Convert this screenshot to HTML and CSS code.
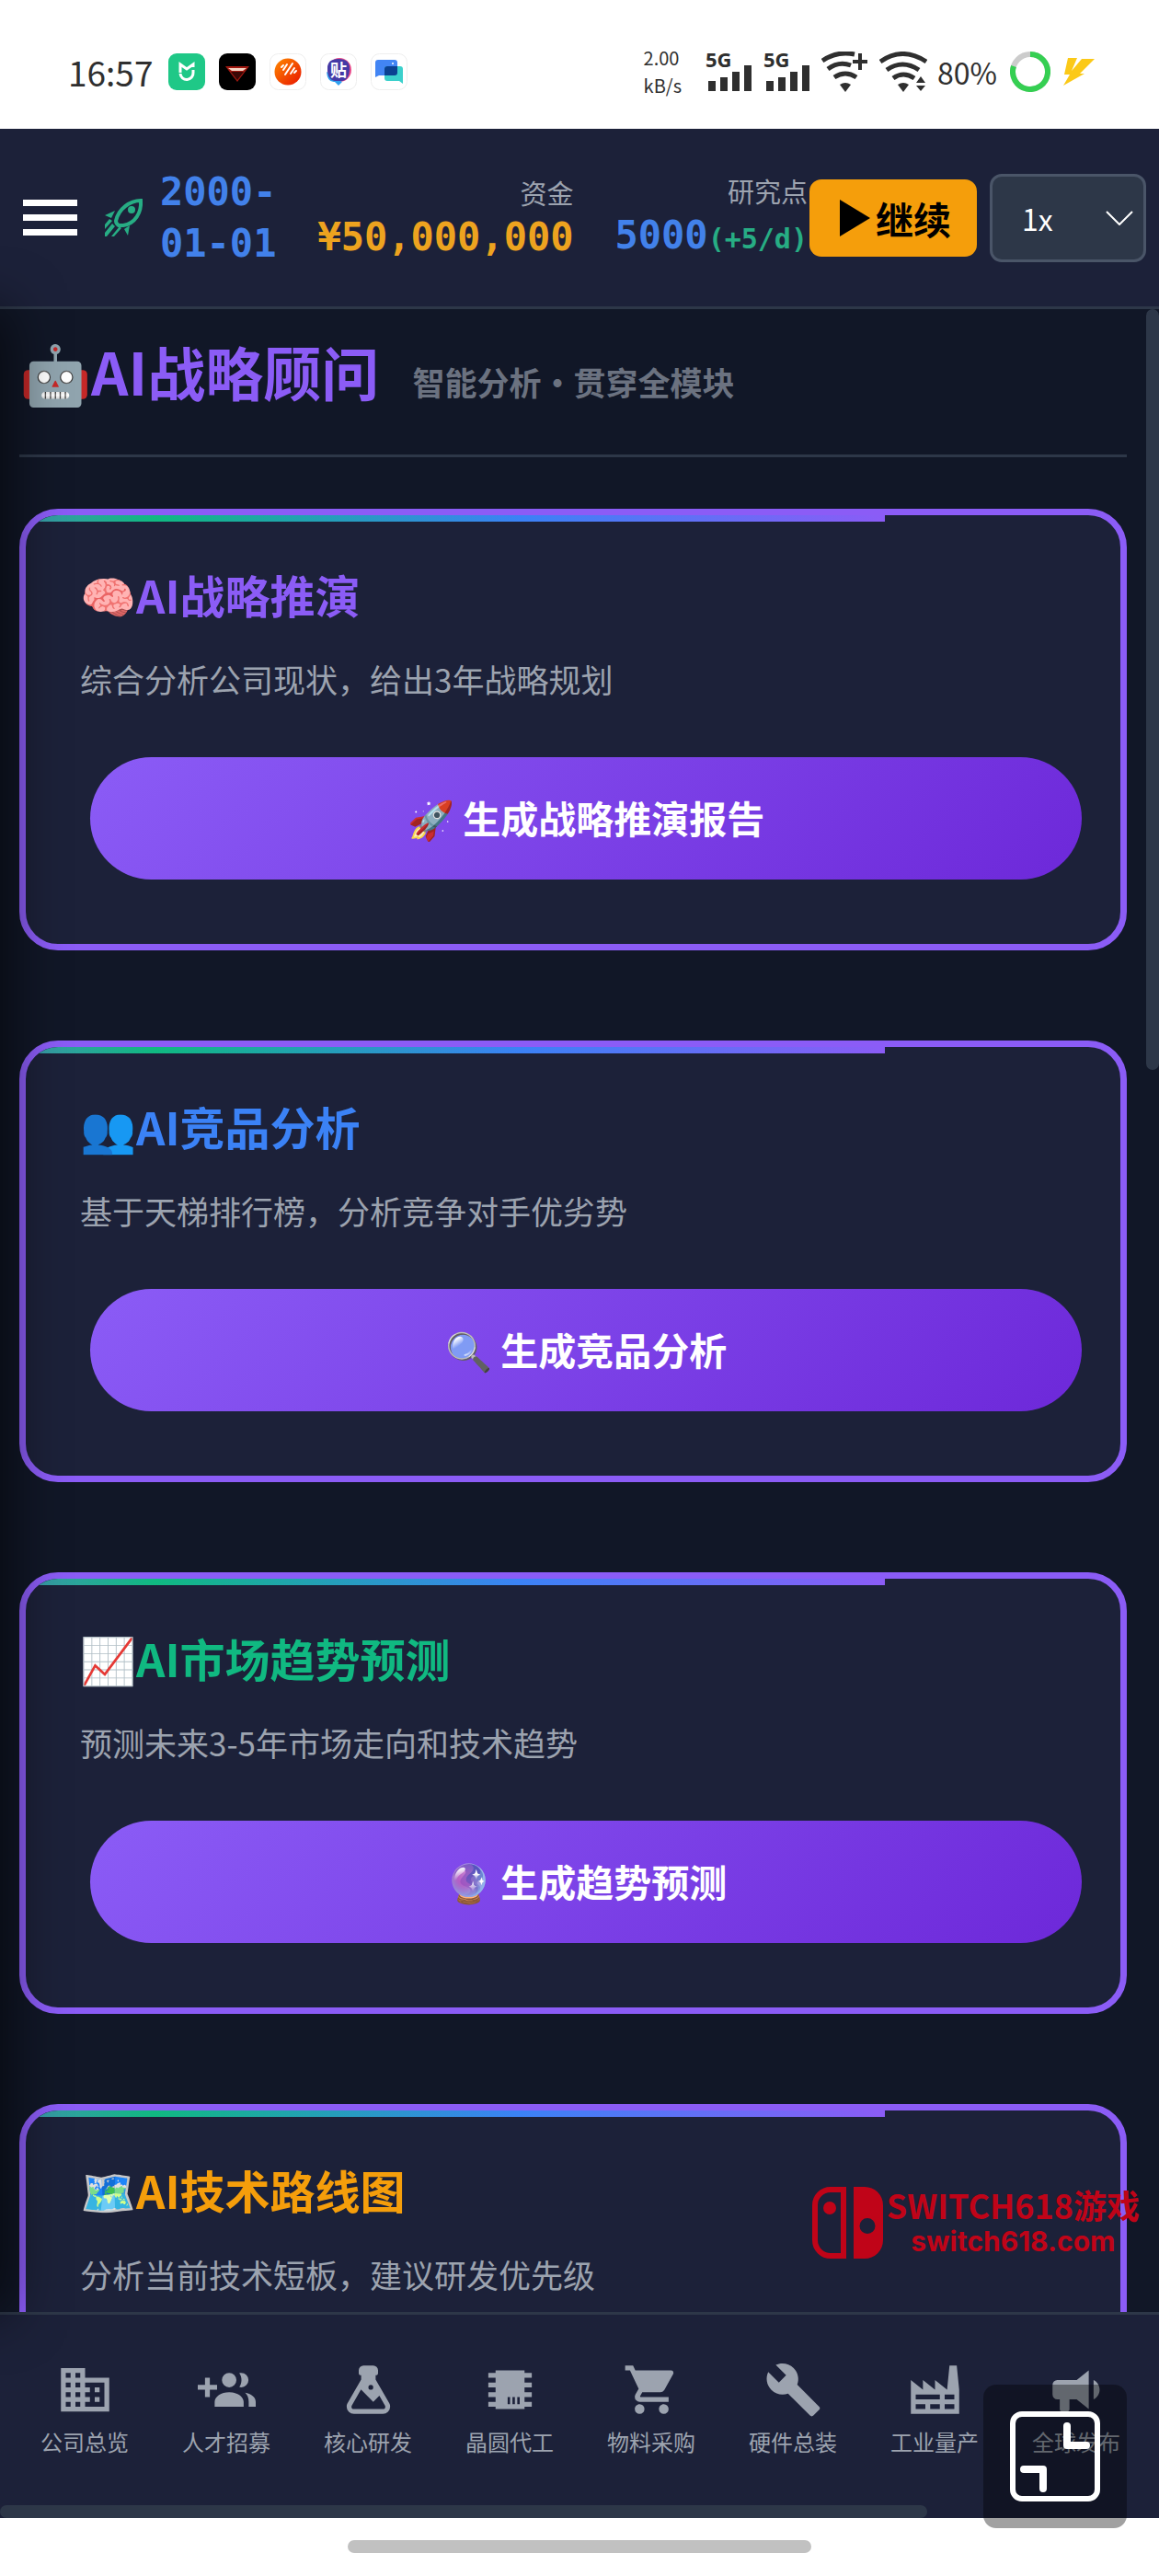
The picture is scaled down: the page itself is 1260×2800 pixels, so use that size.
FILE: index.html
```html
<!DOCTYPE html>
<html lang="zh-CN">
<head>
    <meta charset="UTF-8">
    <title>AI战略顾问</title>
    <link rel="stylesheet" href="styles.css">
</head>
<body>
    <div class="sys-bar">
        <span class="clock">16:57</span>
        <svg class="app" viewBox="0 0 40 40"><rect width="40" height="40" rx="9" fill="#1fc887"/><path d="M13 21V12l7 5 7-5v3" fill="none" stroke="#fff" stroke-width="3"/><path d="M13 22a7 7 0 0 0 14-1v-3" fill="none" stroke="#fff" stroke-width="3"/></svg>
        <svg class="app" viewBox="0 0 40 40"><rect width="40" height="40" rx="9" fill="#000"/><path d="M7 14h26L20 31z" fill="#a01810"/><path d="M10 16h20l-4 3H14z" fill="#f5d5c5"/><path d="M13 20h14l-7 9z" fill="#3a0705"/></svg>
        <svg class="app" viewBox="0 0 40 40"><defs><linearGradient id="sun" x1="0" y1="0" x2="1" y2="1"><stop offset="0" stop-color="#ff8a00"/><stop offset="1" stop-color="#e81400"/></linearGradient></defs><rect x=".5" y=".5" width="39" height="39" rx="9" fill="#fff" stroke="#eee"/><circle cx="20" cy="20" r="14.500" fill="url(#sun)"/><path d="M13 15l2-2M15 18l4-6M17 23l8-12M23 22l4-6M27 21l2-2" stroke="#fff" stroke-width="2" stroke-linecap="round"/></svg>
        <svg class="app" viewBox="0 0 40 40"><rect x=".5" y=".5" width="39" height="39" rx="9" fill="#fff" stroke="#eee"/><circle cx="21" cy="18" r="13" fill="#e84a8a"/><path d="M7 20q1 12 9 11l4 4 4-4z" fill="#2fa0f0"/><path d="M8 16q0-10 12-10t12 10q0 13-8 14h-8Q8 29 8 16z" fill="#453aa6"/><text x="20" y="25" text-anchor="middle" class="app-char">贴</text></svg>
        <svg class="app" viewBox="0 0 40 40"><rect x=".5" y=".5" width="39" height="39" rx="9" fill="#fff" stroke="#eee"/><path d="M5 26V10q0-3 3-3h18q3 0 3 3v11q0 3-3 3H9z" fill="#4285f4"/><path d="M35 33V17q0-3-3-3H18q-3 0-3 3v10q0 3 3 3h13z" fill="#3cd0cc"/><path d="M15 24v-7q0-3 3-3h11v7q0 3-3 3z" fill="#0b4191"/><circle cx="24" cy="11" r="1" fill="#fff"/></svg>
        <span class="speed">2.00<br>kB/s</span>
        <svg class="signal" viewBox="0 0 52 44"><text x="0" y="17">5G</text><path d="M3 32h8v11H3zM16 28h8v15h-8zM29 22h8v21h-8zM42 15h8v28h-8z"/></svg>
        <svg class="signal" viewBox="0 0 52 44"><text x="0" y="17">5G</text><path d="M3 32h8v11H3zM16 28h8v15h-8zM29 22h8v21h-8zM42 15h8v28h-8z"/></svg>
        <svg class="wifi" viewBox="0 0 52 44"><g fill="none" stroke="#2f2f2f" stroke-width="5"><path d="M1 10Q17-1 36 3"/><path d="M7 19q12-9 25-4"/><path d="M14 28q12-8 24 0"/></g><path d="M20 36q6-4 12 0l-6 8z"/><path d="M34 9h6V2h4v7h6v4h-6v7h-4v-7h-6z"/></svg>
        <svg class="wifi" viewBox="0 0 52 44"><g fill="none" stroke="#2f2f2f" stroke-width="5"><path d="M1 11Q25-6 51 11"/><path d="M8 20q17-12 35 0"/><path d="M15 29q11-8 23 0"/></g><path d="M20 36q6-4 12 0l-6 8zM45 27l5 7H40zM45 43l-5-6h10z"/></svg>
        <span class="battery-num">80%</span>
        <svg class="ring" viewBox="0 0 44 44"><circle cx="22" cy="22" r="19" fill="none" stroke="#ccc" stroke-width="6"/><path d="M22 3a19 19 0 1 1-18 13" fill="none" stroke="#35cf52" stroke-width="6"/></svg>
        <svg class="bolt" viewBox="0 0 34 30"><path d="M5 0h10L9 14 20 1h14L18 17h5L0 30l7-12H1z" fill="#fbc918"/></svg>
    </div>

    <header class="top-bar">
        <button class="menu-btn" aria-label="菜单"><span></span><span></span><span></span></button>
        <svg class="logo" viewBox="0 0 42 42"><path d="M39 2C27 2 15 11 12 24q0 3 3 5h5C33 27 40 15 39 2z" fill="none" stroke="#27ad84" stroke-width="4"/><circle cx="29" cy="12" r="4"/><path d="M0 18l11-5-4 8zM21 33l6-4-2 11zM0 37l8-10 3 3-9 11H0zM7 41l9-11 2 2-8 9zM5 22l3 2-8 9v-5z"/></svg>
        <div class="date">2000-<br>01-01</div>
        <div class="stat">
            <span class="stat-label">资金</span>
            <span class="stat-value money">¥50,000,000</span>
        </div>
        <div class="stat">
            <span class="stat-label">研究点</span>
            <span class="stat-value points">5000<small>(+5/d)</small></span>
        </div>
        <button class="play-btn"><svg viewBox="0 0 33 40"><path d="M0 0l33 20L0 40z"/></svg>继续</button>
        <div class="speed-box">
            <select class="speed-select" aria-label="速度"><option>1x</option></select>
            <svg viewBox="0 0 30 16"><path d="M1 1l14 14L29 1" fill="none" stroke="#fff" stroke-width="2"/></svg>
        </div>
    </header>

    <main class="content">
        <h1 class="page-title">🤖AI战略顾问 <small>智能分析·贯穿全模块</small></h1>

        <section class="ai-card">
            <h3 class="purple">🧠AI战略推演</h3>
            <p>综合分析公司现状，给出3年战略规划</p>
            <button class="ai-btn">🚀 生成战略推演报告</button>
        </section>

        <section class="ai-card">
            <h3 class="blue">👥AI竞品分析</h3>
            <p>基于天梯排行榜，分析竞争对手优劣势</p>
            <button class="ai-btn">🔍 生成竞品分析</button>
        </section>

        <section class="ai-card">
            <h3 class="green">📈AI市场趋势预测</h3>
            <p>预测未来3-5年市场走向和技术趋势</p>
            <button class="ai-btn">🔮 生成趋势预测</button>
        </section>

        <section class="ai-card">
            <h3 class="orange">🗺️AI技术路线图</h3>
            <p>分析当前技术短板，建议研发优先级</p>
        </section>

        <div class="scroll-thumb"></div>

        <div class="watermark">
            <svg viewBox="0 0 77 78"><path d="M34 3H20A17 17 0 0 0 3 20v38a17 17 0 0 0 17 17h14z" fill="none" stroke="#c00418" stroke-width="6"/><circle cx="19" cy="23" r="7"/><path fill-rule="evenodd" d="M45 0h12a20 20 0 0 1 20 20v38a20 20 0 0 1-20 20H45zM60 34a8 8 0 1 0 0 17 8 8 0 0 0 0-17z"/></svg>
            <div><span>SWITCH618游戏</span><span class="url">switch618.com</span></div>
        </div>
    </main>

    <nav class="bottom-nav">
        <div class="nav-items">
            <a href="#company"><svg viewBox="0 0 24 24"><path d="M12 7V3H2v18h20V7H12zM6 19H4v-2h2v2zm0-4H4v-2h2v2zm0-4H4V9h2v2zm0-4H4V5h2v2zm4 12H8v-2h2v2zm0-4H8v-2h2v2zm0-4H8V9h2v2zm0-4H8V5h2v2zm10 12h-8v-2h2v-2h-2v-2h2v-2h-2V9h8v10zm-2-8h-2v2h2v-2zm0 4h-2v2h2v-2z"/></svg>公司总览</a>
            <a href="#hire"><svg viewBox="0 0 24 24"><path d="M8 10H5V7H3v3H0v2h3v3h2v-3h3zM13 11a3 3 0 1 0 0-6 3 3 0 0 0 0 6zM13 13c-3.300 0-6 1.800-6 4v2h12v-2c0-2.200-2.700-4-6-4zM17.200 5.100c.6.800.9 1.800.9 2.900s-.3 2.100-.9 2.900c.2.100.5.100.8.100a3 3 0 0 0 0-6c-.3 0-.6 0-.8.100zM19.600 13.200c1 .9 1.500 2.200 1.500 3.800v2H24v-2c0-2-2-3.400-4.400-3.800z"/></svg>人才招募</a>
            <a href="#research"><svg viewBox="0 0 24 24"><path d="M6 22a3 3 0 0 1-3-3c0-.6.18-1.16.5-1.63L9 7.810V6a1 1 0 0 1-1-1V4a2 2 0 0 1 2-2h4a2 2 0 0 1 2 2v1a1 1 0 0 1-1 1v1.810l5.500 9.560c.32.47.5 1.030.5 1.630a3 3 0 0 1-3 3H6m-1-3a1 1 0 0 0 1 1h12a1 1 0 0 0 1-1c0-.21-.07-.41-.18-.57l-2.290-3.960L14 17l-5.070-5.070-3.750 6.500c-.11.16-.18.36-.18.57m8-9a1 1 0 0 0-1 1 1 1 0 0 0 1 1 1 1 0 0 0 1-1 1 1 0 0 0-1-1z"/></svg>核心研发</a>
            <a href="#wafer"><svg viewBox="0 0 24 24"><path d="M6 4h12v1h3v2h-3v2h3v2h-3v2h3v2h-3v2h3v2h-3v1H6v-1H3v-2h3v-2H3v-2h3v-2H3V9h3V7H3V5h3V4m5 11v3h1v-3h-1m2 0v3h1v-3h-1m2 0v3h1v-3h-1z"/></svg>晶圆代工</a>
            <a href="#purchase"><svg viewBox="0 0 24 24"><path d="M17 18a2 2 0 0 1 2 2 2 2 0 0 1-2 2 2 2 0 0 1-2-2c0-1.110.89-2 2-2M1 2h3.270l.94 2H20a1 1 0 0 1 1 1c0 .17-.05.34-.12.5l-3.580 6.470c-.34.61-1 1.030-1.750 1.030H8.100l-.9 1.630-.03.12a.25.25 0 0 0 .25.25H19v2H7a2 2 0 0 1-2-2c0-.35.09-.68.24-.96l1.360-2.450L3 4H1V2m6 16a2 2 0 0 1 2 2 2 2 0 0 1-2 2 2 2 0 0 1-2-2c0-1.110.89-2 2-2z"/></svg>物料采购</a>
            <a href="#assemble"><svg viewBox="0 0 24 24"><path d="M22.700 19l-9.100-9.100c.9-2.300.4-5-1.500-6.900-2-2-5-2.400-7.400-1.300L9 6 6 9 1.600 4.700C.4 7.100.9 10.100 2.900 12.100c1.900 1.900 4.600 2.400 6.900 1.500l9.100 9.100c.4.4 1 .4 1.400 0l2.300-2.300c.5-.4.5-1.100.1-1.400z"/></svg>硬件总装</a>
            <a href="#factory"><svg viewBox="0 0 24 24"><path d="M4 18v2h4v-2H4m0-4v2h10v-2H4m6 4v2h4v-2h-4m6-4v2h4v-2h-4m0 4v2h4v-2h-4M2 22V8l5 4V8l5 4V8l5 4 1-10h3l1 10v10H2z"/></svg>工业量产</a>
            <a href="#launch"><svg viewBox="0 0 24 24"><path d="M12 8H4a2 2 0 0 0-2 2v4a2 2 0 0 0 2 2h1v4a1 1 0 0 0 1 1h2a1 1 0 0 0 1-1v-4h3l5 4V4l-5 4m9.500 4c0 1.710-.96 3.260-2.500 4V8c1.530.75 2.500 2.300 2.500 4z"/></svg>全球发布</a>
        </div>
        <div class="nav-thumb"></div>
    </nav>

    <footer class="gesture-bar">
        <div class="pill"></div>
        <button class="shrink-btn" aria-label="退出全屏"><svg viewBox="0 0 98 98"><g fill="none" stroke="#fff"><rect x="3" y="3" width="92" height="92" rx="10" stroke-width="6"/><path d="M62 16v21h21M15 63h21v21" stroke-width="8" stroke-linecap="round" stroke-linejoin="round"/></g></svg></button>
    </footer>
</body>
</html>
```
FILE: styles.css
```css
* {
    box-sizing: border-box;
    margin: 0;
    padding: 0;
}
body {
    display: flex;
    flex-direction: column;
    height: 100vh;
    overflow: hidden;
    background: #111727;
    color: #fff;
    font-family: "Noto Sans CJK SC", sans-serif;
}
button, select {
    font-family: inherit;
    border: none;
    cursor: pointer;
}
svg {
    display: block;
    flex-shrink: 0;
}

/* 系统状态栏 */
.sys-bar {
    display: flex;
    align-items: center;
    height: 140px;
    padding: 16px 70px 0 74px;
    background: #fff;
    color: #2f2f2f;
    fill: #2f2f2f;
}
.clock {
    width: 94px;
    font-size: 37px;
}
.app {
    width: 40px;
    height: 40px;
    margin-left: 15px;
}
.app-char {
    font-size: 18px;
    font-weight: bold;
    fill: #fff;
}
.speed {
    margin-left: auto;
    margin-right: 26px;
    font-size: 20px;
    line-height: 30px;
}
.signal {
    width: 52px;
    height: 44px;
    margin-right: 11px;
    overflow: visible;
    font: bold 22px "Noto Sans", sans-serif;
}
.wifi {
    width: 52px;
    height: 44px;
    margin-right: 11px;
}
.battery-num {
    font-size: 32px;
}
.ring {
    width: 44px;
    height: 44px;
    margin: 0 14px;
}
.bolt {
    width: 34px;
    height: 30px;
}

/* 顶部栏 */
.top-bar {
    display: flex;
    align-items: center;
    height: 196px;
    padding: 0 14px 0 25px;
    background: #1c2139;
    border-bottom: 3px solid #2d3748;
}
.menu-btn {
    display: flex;
    flex-direction: column;
    gap: 9px;
    width: 59px;
    background: none;
}
.menu-btn span {
    height: 7px;
    background: #fff;
}
.logo {
    width: 42px;
    height: 42px;
    margin: 0 18px 0 30px;
    fill: #27ad84;
}
.date, .stat-value {
    font-family: "DejaVu Sans Mono", monospace;
    font-size: 42px;
    font-weight: bold;
    line-height: 56px;
    white-space: nowrap;
}
.date {
    color: #4281ea;
}
.stat {
    display: flex;
    flex-direction: column;
    align-items: flex-end;
    margin-left: auto;
}
.stat-label {
    font-size: 29px;
    line-height: 42px;
    color: #9ca3af;
}
.money {
    color: #eda31f;
}
.points {
    color: #4281ea;
}
.points small {
    font-size: 30px;
    color: #27ad84;
}
.play-btn {
    display: flex;
    align-items: center;
    gap: 6px;
    height: 84px;
    margin: 0 14px 0 2px;
    padding: 0 28px 0 33px;
    border-radius: 13px;
    background: #f59e0b;
    color: #000;
    font-size: 41px;
    font-weight: bold;
}
.play-btn svg {
    width: 33px;
    height: 40px;
}
.speed-box {
    position: relative;
}
.speed-box svg {
    position: absolute;
    top: 40px;
    right: 14px;
    width: 30px;
    height: 16px;
    pointer-events: none;
}
.speed-select {
    appearance: none;
    width: 170px;
    height: 96px;
    padding-left: 32px;
    border: 3px solid #4a5568;
    border-radius: 13px;
    background: #2d3748;
    color: #fff;
    font-size: 32px;
}

/* 主内容 */
.content {
    position: relative;
    flex: 1;
    min-height: 0;
    padding: 23px 35px 0 21px;
}
/* 收起的侧边栏投下的阴影 */
.content::before {
    content: "";
    position: absolute;
    z-index: 2;
    top: 0;
    bottom: 0;
    left: -100px;
    width: 100px;
    box-shadow: 10px 0 60px rgba(0, 0, 0, 0.6);
}
.page-title {
    margin-bottom: 56px;
    padding-bottom: 47px;
    border-bottom: 3px solid #2d3748;
    color: #8b5cf6;
    font-size: 63px;
    line-height: 88px;
}
.page-title small {
    margin-left: 22px;
    color: #6b7280;
    font-size: 35px;
    line-height: 35px;
}
.ai-card {
    position: relative;
    margin-bottom: 98px;
    padding: 50px 42px 70px 59px;
    border: 7px solid #8b5cf6;
    border-radius: 42px;
    background: #1c2139;
    overflow: hidden;
}
.ai-card::before {
    content: "";
    position: absolute;
    top: 0;
    left: -256px;
    width: 100%;
    height: 7px;
    background: linear-gradient(90deg, #8b5cf6, #10b981, #3b82f6, #8b5cf6);
}
.ai-card h3 {
    font-size: 49px;
    line-height: 72px;
}
.ai-card p {
    margin-top: 28px;
    color: #9ca3af;
    font-size: 35px;
    line-height: 56px;
}
.purple {
    color: #8b5cf6;
}
.blue {
    color: #3b82f6;
}
.green {
    color: #10b981;
}
.orange {
    color: #f59e0b;
}
.ai-btn {
    display: block;
    width: calc(100% - 11px);
    height: 133px;
    margin: 57px 0 0 11px;
    padding-bottom: 4px;
    border-radius: 67px;
    background: linear-gradient(135deg, #8b5cf6, #6d28d9);
    color: #fff;
    font-size: 41px;
    font-weight: bold;
}
.scroll-thumb {
    position: absolute;
    top: 0;
    right: 0;
    width: 14px;
    height: 38%;
    border-radius: 7px;
    background: #2d3748;
}
.watermark {
    position: absolute;
    z-index: 3;
    right: 21px;
    bottom: 56px;
    display: flex;
    gap: 4px;
    color: #c00418;
    fill: #c00418;
    font-weight: bold;
}
.watermark svg {
    width: 77px;
    height: 78px;
}
.watermark div {
    display: flex;
    flex-direction: column;
    align-items: center;
}
.watermark span {
    font-size: 36px;
    line-height: 38px;
}
.watermark .url {
    font-family: Inter, sans-serif;
    font-size: 30px;
    line-height: 42px;
}

/* 底部导航 */
.bottom-nav {
    position: relative;
    border-top: 3px solid #2d3748;
    background: #1c2139;
}
.nav-items {
    display: flex;
    padding: 50px 13px 52px 15px;
}
.nav-items a {
    flex: 1;
    display: flex;
    flex-direction: column;
    align-items: center;
    gap: 8px;
    color: #9ca3af;
    fill: #9ca3af;
    font-size: 24px;
    line-height: 34px;
    text-decoration: none;
}
.nav-items svg {
    width: 63px;
    height: 63px;
}
.nav-thumb {
    width: 80%;
    height: 14px;
    border-radius: 7px;
    background: #2d3748;
}
.gesture-bar {
    position: relative;
    height: 63px;
    padding-top: 24px;
    background: #fff;
}
.pill {
    width: 40%;
    height: 14px;
    margin: 0 auto;
    border-radius: 7px;
    background: #c1c1c1;
}
.shrink-btn {
    position: absolute;
    right: 35px;
    bottom: 52px;
    width: 156px;
    height: 156px;
    padding: 29px;
    border-radius: 14px;
    background: rgba(0, 0, 0, 0.37);
}
.shrink-btn svg {
    width: 98px;
    height: 98px;
}
```
